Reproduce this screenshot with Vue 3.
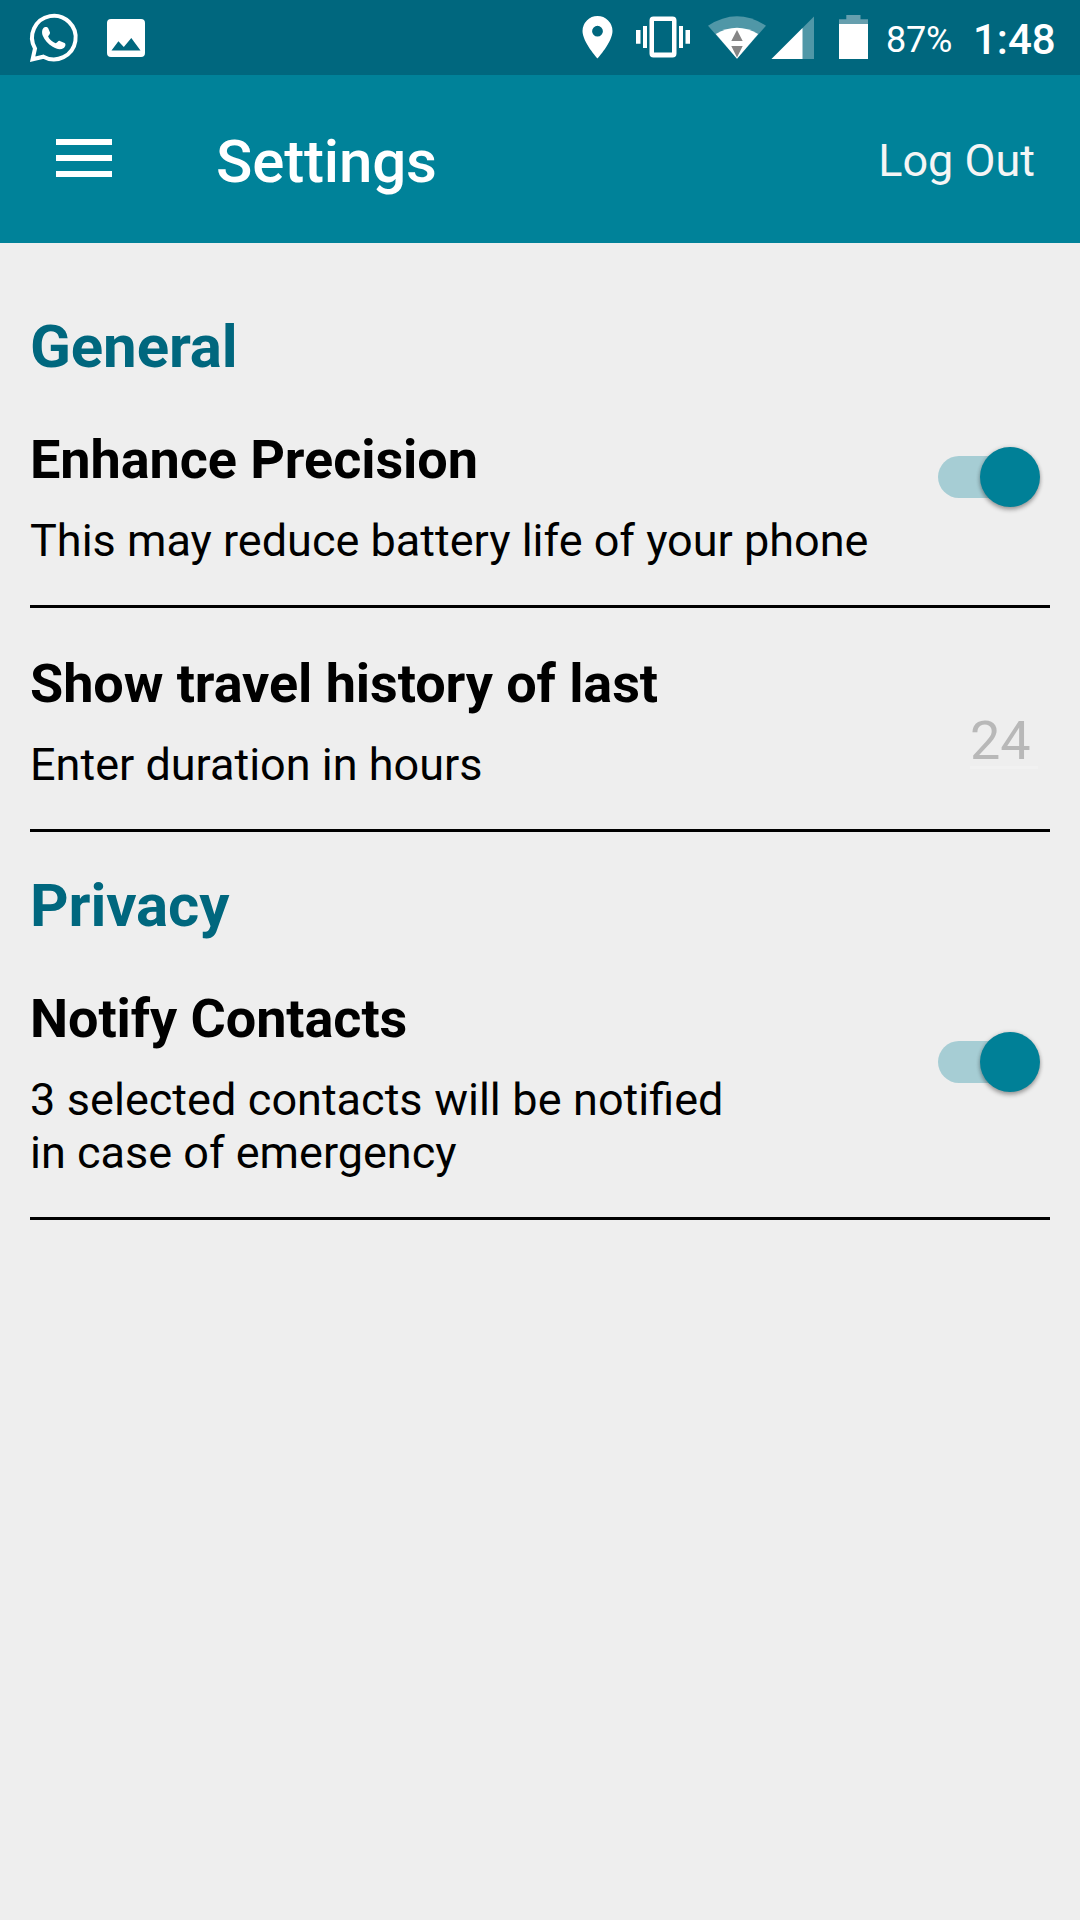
<script setup>
import { ref } from 'vue'

const sections = ref([
  {
    title: 'General',
    items: [
      { title: 'Enhance Precision', lines: ['This may reduce battery life of your phone'], type: 'switch' },
      { title: 'Show travel history of last', lines: ['Enter duration in hours'], type: 'field', value: '24' },
    ],
  },
  {
    title: 'Privacy',
    items: [
      {
        title: 'Notify Contacts',
        lines: ['3 selected contacts will be notified', 'in case of emergency'],
        type: 'switch',
        low: true,
      },
    ],
  },
])
</script>

<template>
  <div class="screen">
    <div class="status">
      <svg class="status-icons" width="150" height="75" viewBox="0 0 150 75">
        <path d="M35 48.5 L32.6 59.3 L43.4 56.7 A21.8 21.8 0 1 0 35 48.5 Z" fill="none" stroke="#fff" stroke-width="4" stroke-linejoin="miter" />
        <path d="M44.5 27.2 C46 26.6 47.6 27 48.2 28.3 L50 32.5 C50.5 33.8 48.2 35.6 48.1 36.5 C49.6 39.6 52.3 42.1 55.6 43.2 C57 43.2 58.3 40.4 59.8 40.9 L64.6 42.9 C66.2 43.8 65.3 46.7 63.8 47.9 C60.4 50.2 56.8 49.2 52.7 46.8 C48 43.9 44.4 39.6 42.8 35.7 C41.5 32.2 42 28.5 44.5 27.2 Z" fill="#fff" />
        <path d="M111 19 H141 A4 4 0 0 1 145 23 V53 A4 4 0 0 1 141 57 H111 A4 4 0 0 1 107 53 V23 A4 4 0 0 1 111 19 Z M111.5 50.5 H140.5 L131.3 38 L123.8 47 L118.4 41.2 Z" fill="#fff" fill-rule="evenodd" />
      </svg>
      <svg class="status-right" width="310" height="75" viewBox="570 0 310 75">
        <path d="M597.5 16 A15 15 0 0 0 582.5 31 C582.5 42 597.5 58.5 597.5 58.5 C597.5 58.5 612.5 42 612.5 31 A15 15 0 0 0 597.5 16 Z M597.5 25.8 A5.4 5.4 0 1 1 597.5 36.6 A5.4 5.4 0 1 1 597.5 25.8 Z" fill="#fff" fill-rule="evenodd" />
        <path d="M653.5 16.5 H672.5 A4 4 0 0 1 676.5 20.5 V53.5 A4 4 0 0 1 672.5 57.5 H653.5 A4 4 0 0 1 649.5 53.5 V20.5 A4 4 0 0 1 653.5 16.5 Z M654 21 V52.5 H672 V21 Z M643 26 H647 V48 H643 Z M636 30 H640.5 V43.7 H636 Z M679 26 H683 V48 H679 Z M685.5 30 H690 V43.7 H685.5 Z" fill="#fff" fill-rule="evenodd" />
        <path d="M708 25.7 Q737 6.7 766 25.7 L737 58.7 Z" fill="#5097a7" />
        <path d="M715.8 34 Q737 21.4 758.2 34 L737 58.7 Z" fill="#fff" />
        <path d="M737 30 L742.7 41 H731.3 Z M731.3 46 H742.7 L737 57.5 Z" fill="#858585" />
        <path d="M814 16.5 V59 H771.5 Z" fill="#5097a7" />
        <path d="M802.5 28 V59 H771.5 Z" fill="#fff" />
        <path d="M839 24.5 V19.3 H846.3 V15 H860.5 V19.3 H868 V24.5 Z" fill="#669fae" />
        <path d="M839 24 H868 V59 H839 Z" fill="#fff" />
      </svg>
      <span class="percent">87%</span>
      <span class="clock">1:48</span>
    </div>

    <header class="appbar">
      <svg class="menu" width="56" height="38" viewBox="0 0 56 38">
        <path d="M0 0 H56 V6 H0 Z M0 16 H56 V22 H0 Z M0 32 H56 V38 H0 Z" fill="#fff" />
      </svg>
      <h1>Settings</h1>
      <span class="logout">Log Out</span>
    </header>

    <main>
      <section v-for="s in sections" :key="s.title">
        <h2>{{ s.title }}</h2>
        <div v-for="item in s.items" :key="item.title" class="row">
          <div class="text">
            <h3>{{ item.title }}</h3>
            <p v-for="line in item.lines" :key="line">{{ line }}</p>
          </div>
          <div v-if="item.type === 'switch'" class="switch" :class="{ low: item.low }">
            <span class="track"></span>
            <span class="thumb"></span>
          </div>
          <div v-else class="field">{{ item.value }}</div>
        </div>
      </section>
    </main>
  </div>
</template>

<style>
body {
  background: #eeeeee;
}
</style>

<style scoped>
.screen {
  width: 1080px;
  height: 1920px;
  overflow: hidden;
  background: #eeeeee;
  color: #000;
  font-family: Roboto, 'Liberation Sans', sans-serif;
}
h1,
h2,
h3,
p {
  margin: 0;
}
.status {
  display: flex;
  height: 75px;
  background: #00677e;
  color: #fff;
}
.status-right {
  margin-left: 420px;
}
.percent {
  margin-left: 6px;
  width: 87px;
  font-size: 36px;
  line-height: 81px;
  letter-spacing: -0.2px;
  white-space: nowrap;
}
.clock {
  font-size: 42px;
  font-weight: 500;
  line-height: 79px;
}
.appbar {
  display: flex;
  box-sizing: border-box;
  height: 168px;
  padding: 0 45px 0 56px;
  background: #008299;
  color: #fff;
}
.menu {
  margin-top: 64px;
}
h1 {
  margin-left: 104px;
  font-size: 60px;
  font-weight: 500;
  line-height: 173px;
  letter-spacing: -0.15px;
}
.logout {
  margin-left: auto;
  font-size: 45px;
  line-height: 171px;
  color: #f5f5f5;
}
main {
  padding: 69px 30px 0;
}
h2 {
  margin-bottom: 46px;
  font-size: 60px;
  font-weight: 700;
  line-height: 70px;
  letter-spacing: -0.1px;
  color: #00677e;
}
section + section {
  margin-top: 39px;
}
.row {
  display: flex;
  justify-content: space-between;
  padding-bottom: 38px;
  border-bottom: 3px solid #000;
}
.row + .row {
  margin-top: 44px;
}
h3 {
  margin-bottom: 23px;
  font-size: 54px;
  font-weight: 700;
  line-height: 63px;
  letter-spacing: -0.08px;
}
p {
  font-size: 45px;
  line-height: 53px;
  white-space: nowrap;
}
p:not(:last-child) {
  word-spacing: 0.4px;
}
.switch {
  display: flex;
  align-items: center;
  width: 102px;
  height: 60px;
  margin: 19px 10px 0 0;
}
.switch.low {
  margin-top: 45px;
}
.track {
  width: 82px;
  height: 42px;
  border-radius: 21px;
  background: #a6cdd4;
}
.thumb {
  flex: none;
  width: 60px;
  height: 60px;
  margin-left: -40.5px;
  border-radius: 50%;
  background: #008097;
  box-shadow: 0 3px 4px rgba(0, 0, 0, 0.3), 0 0 4px rgba(0, 0, 0, 0.15);
}
.field {
  box-sizing: border-box;
  align-self: flex-start;
  width: 68px;
  height: 69px;
  margin: 48px 12px 0 0;
  border-bottom: 3px solid #f1f1f1;
  font-size: 54px;
  line-height: 81px;
  color: #b8b8b8;
}
</style>
